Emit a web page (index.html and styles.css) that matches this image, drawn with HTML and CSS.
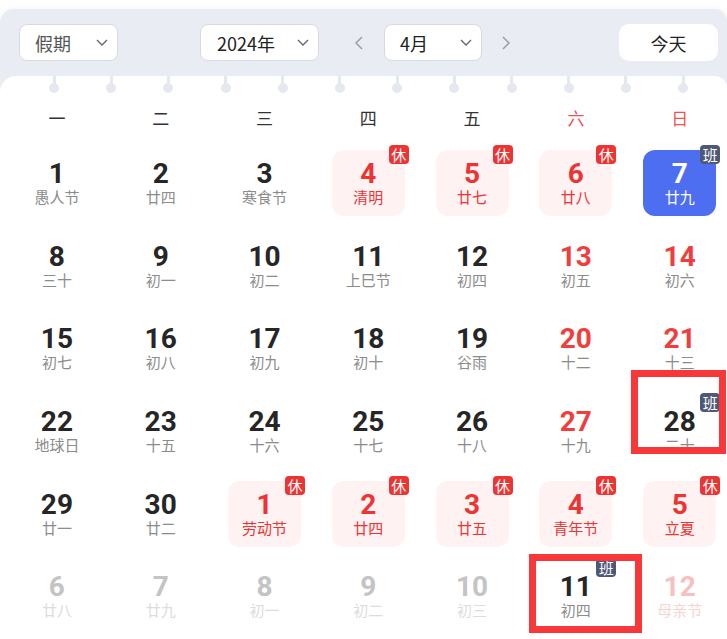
FILE: index.html
```html
<!doctype html>
<html>
<head>
<meta charset="utf-8">
<title>万年历</title>
<link rel="stylesheet" href="styles.css">
</head>
<body>
<div class="cal">
	<div class="head">
		<div class="sel sel-hol">假期<svg class="caret" viewBox="0 0 12 7"><path d="M1 1L6 6L11 1"/></svg></div>
		<div class="sel sel-year">2024年<svg class="caret" viewBox="0 0 12 7"><path d="M1 1L6 6L11 1"/></svg></div>
		<svg class="arrow arrow-prev" viewBox="0 0 8 14"><path d="M7 1L1 7L7 13"/></svg>
		<div class="sel sel-month">4月<svg class="caret" viewBox="0 0 12 7"><path d="M1 1L6 6L11 1"/></svg></div>
		<svg class="arrow arrow-next" viewBox="0 0 8 14"><path d="M1 1L7 7L1 13"/></svg>
		<button class="today">今天</button>
	</div>
	<div class="panel">
		<div class="rings"><i></i><i></i><i></i><i></i><i></i><i></i><i></i><i></i><i></i><i></i><i></i><i></i></div>
		<div class="week">
			<span>一</span><span>二</span><span>三</span><span>四</span><span>五</span><span class="we">六</span><span class="we">日</span>
		</div>
		<div class="days">
			<div class="day"><b>1</b><em>愚人节</em></div>
			<div class="day"><b>2</b><em>廿四</em></div>
			<div class="day"><b>3</b><em>寒食节</em></div>
			<div class="day rest"><b>4</b><em>清明</em><span class="tag">休</span></div>
			<div class="day rest"><b>5</b><em>廿七</em><span class="tag">休</span></div>
			<div class="day rest"><b>6</b><em>廿八</em><span class="tag">休</span></div>
			<div class="day cur"><b>7</b><em>廿九</em><span class="tag tag-work">班</span></div>

			<div class="day"><b>8</b><em>三十</em></div>
			<div class="day"><b>9</b><em>初一</em></div>
			<div class="day"><b>10</b><em>初二</em></div>
			<div class="day"><b>11</b><em>上巳节</em></div>
			<div class="day"><b>12</b><em>初四</em></div>
			<div class="day wkend"><b>13</b><em>初五</em></div>
			<div class="day wkend"><b>14</b><em>初六</em></div>

			<div class="day"><b>15</b><em>初七</em></div>
			<div class="day"><b>16</b><em>初八</em></div>
			<div class="day"><b>17</b><em>初九</em></div>
			<div class="day"><b>18</b><em>初十</em></div>
			<div class="day"><b>19</b><em>谷雨</em></div>
			<div class="day wkend"><b>20</b><em>十二</em></div>
			<div class="day wkend"><b>21</b><em>十三</em></div>

			<div class="day"><b>22</b><em>地球日</em></div>
			<div class="day"><b>23</b><em>十五</em></div>
			<div class="day"><b>24</b><em>十六</em></div>
			<div class="day"><b>25</b><em>十七</em></div>
			<div class="day"><b>26</b><em>十八</em></div>
			<div class="day wkend"><b>27</b><em>十九</em></div>
			<div class="day"><b>28</b><em>二十</em><span class="tag tag-work">班</span></div>

			<div class="day"><b>29</b><em>廿一</em></div>
			<div class="day"><b>30</b><em>廿二</em></div>
			<div class="day rest"><b>1</b><em>劳动节</em><span class="tag">休</span></div>
			<div class="day rest"><b>2</b><em>廿四</em><span class="tag">休</span></div>
			<div class="day rest"><b>3</b><em>廿五</em><span class="tag">休</span></div>
			<div class="day rest"><b>4</b><em>青年节</em><span class="tag">休</span></div>
			<div class="day rest"><b>5</b><em>立夏</em><span class="tag">休</span></div>

			<div class="day other"><b>6</b><em>廿八</em></div>
			<div class="day other"><b>7</b><em>廿九</em></div>
			<div class="day other"><b>8</b><em>初一</em></div>
			<div class="day other"><b>9</b><em>初二</em></div>
			<div class="day other"><b>10</b><em>初三</em></div>
			<div class="day"><b>11</b><em>初四</em><span class="tag tag-work">班</span></div>
			<div class="day other other-red"><b>12</b><em>母亲节</em></div>
		</div>
	</div>
</div>
<div class="mark mark-28"></div>
<div class="mark mark-11"></div>
</body>
</html>
```

FILE: styles.css
```css
*{margin:0; padding:0; box-sizing:border-box;}
body{
	position: relative;
	width: 727px;
	height: 639px;
	overflow: hidden;
	background: #fff;
	font-family: "Noto Sans CJK SC", "Noto Sans", sans-serif;
	color: #222;
}
.cal{
	margin-top: 9px;
	width: 727px;
	background: #e9ecf3;
	border-radius: 14px 12px 0 0;
	box-shadow: 0 0 8px rgba(0,0,0,0.05);
	overflow: hidden;
}

/* 顶部工具条 */
.head{
	display: flex;
	align-items: center;
	height: 67px;
	padding-left: 19px;
}
.sel{
	display: flex;
	align-items: center;
	justify-content: space-between;
	height: 37px;
	padding: 0 9px 0 15px;
	background: #fff;
	border: 1px solid #d8dae2;
	border-radius: 8px;
	font-size: 18px;
	color: #222;
}
.sel-hol{ width: 99px; color: #555; }
.sel-year{ width: 119px; margin-left: 82px; padding-left: 16px; }
.sel-month{ width: 98px; margin-left: 21px; }
.caret{
	width: 12px;
	height: 7px;
	fill: none;
	stroke: #5e6477;
	stroke-width: 1.3;
}
.arrow{
	width: 8px;
	height: 14px;
	fill: none;
	stroke: #979dab;
	stroke-width: 1.5;
}
.arrow-prev{ margin-left: 36px; }
.arrow-next{ margin-left: 20px; }
.today{
	width: 99px;
	height: 37px;
	margin-left: 109px;
	border: none;
	border-radius: 10px;
	background: #fff;
	font-family: inherit;
	font-size: 18px;
	color: #222;
}

/* 日历主体 */
.panel{
	background: #fff;
	border-radius: 16px 12px 0 0;
	height: 572px;
}
.rings{
	display: flex;
	gap: 47.2px;
	padding-left: 49px;
	height: 17px;
}
.rings i{
	position: relative;
	width: 10px;
	height: 17px;
}
.rings i:before{
	content: "";
	position: absolute;
	left: 3.5px;
	top: 0;
	width: 3px;
	height: 9px;
	background: #e6e8ef;
}
.rings i:after{
	content: "";
	position: absolute;
	left: 0;
	bottom: 0;
	width: 10px;
	height: 10px;
	border-radius: 50%;
	background: #e6e8ef;
}
.week,.days{
	display: grid;
	grid-template-columns: repeat(7, 103.8px);
	margin-left: 5px;
}
.week{
	margin-top: 10px;
	line-height: 30px;
	font-size: 17px;
	color: #333;
	text-align: center;
}
.week .we{ color: #f4504f; }
.days{
	margin-top: 9px;
	grid-auto-rows: 82.6px;
	justify-items: center;
	align-items: center;
}
.day{
	position: relative;
	display: flex;
	flex-direction: column;
	align-items: center;
	justify-content: center;
	width: 73px;
	height: 66px;
	border-radius: 12px;
}
.day b{
	font-family: Roboto, "Liberation Sans", sans-serif;
	font-weight: 700;
	font-size: 28px;
	line-height: 28px;
	color: #262626;
}
.day em{
	font-style: normal;
	font-size: 15px;
	line-height: 18px;
	color: #8c8c8c;
}
.wkend b{ color: #f03e3e; }
.rest{ background: #fef2f2; }
.rest b,.rest em{ color: #ee3333; }
.cur{ background: #4e6ef2; }
.cur b,.cur em{ color: #fff; }
.other b{ color: #c4c4c4; }
.other em{ color: #dcdcdc; }
.other-red b{ color: #f8c0c0; }
.other-red em{ color: #f6d4d4; }
.tag{
	position: absolute;
	top: -5px;
	right: -4px;
	width: 20px;
	height: 19px;
	border-radius: 4px;
	background: #ee3333;
	color: #fff;
	font-size: 15px;
	line-height: 19px;
	text-align: center;
}
.tag-work{ background: #4e5877; }

/* 标注框 */
.mark{
	position: absolute;
	border: 7px solid #f83838;
}
.mark-28{ left: 631px; top: 370px; width: 95px; height: 84px; }
.mark-11{ left: 529px; top: 554px; width: 113px; height: 79px; }
```
